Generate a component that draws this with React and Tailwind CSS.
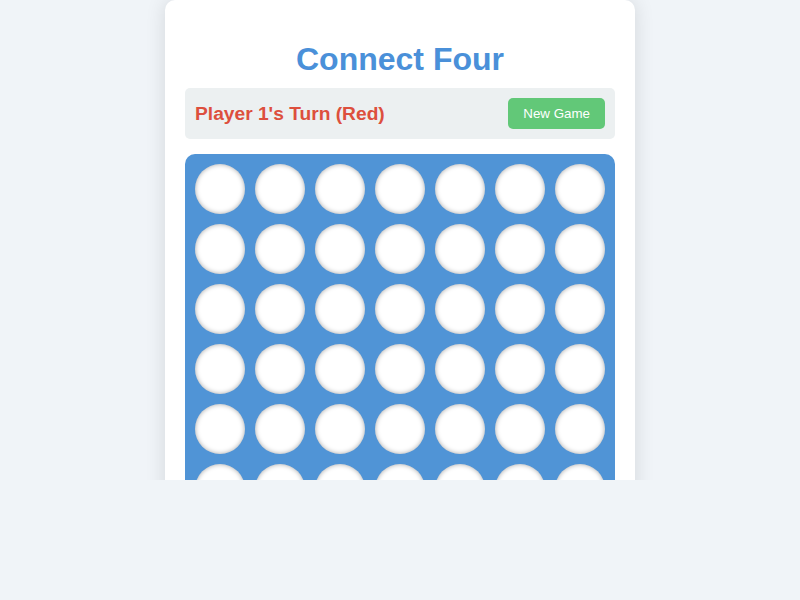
const ROWS = 6;
const COLS = 7;

const Cell = () => (
  <div className="h-[50px] w-[50px] rounded-full bg-white shadow-[inset_0_0_5px_rgba(0,0,0,0.35)]" />
);

const App = () => {
  const cells = Array.from({ length: ROWS * COLS });

  return (
    <div
      className="min-h-[600px] w-full bg-[#f0f4f8]"
      style={{ fontFamily: '"Liberation Sans", Arial, sans-serif' }}
    >
      <div className="h-[480px] overflow-hidden">
        <div className="mx-auto w-[470px] rounded-[10px] bg-white p-5 shadow-[0_0_20px_rgba(0,0,0,0.12)]">
          <h1 className="mt-[21px] mb-[10px] text-center text-[32px] font-bold leading-[37px] text-[#4a90d9]">
            Connect Four
          </h1>

          <div className="mb-[15px] flex items-center justify-between rounded-[5px] bg-[#ecf0f1] p-[10px]">
            <span className="text-[19.2px] font-bold leading-[22px] text-[#dd4f3d]">
              Player 1's Turn (Red)
            </span>
            <button className="rounded-[5px] bg-[#62c878] px-[15px] py-[8px] text-[13.33px] leading-[15px] text-white">
              New Game
            </button>
          </div>

          <div className="grid grid-cols-7 gap-[10px] rounded-[10px] bg-[#5094d6] p-[10px]">
            {cells.map((_, i) => (
              <Cell key={i} />
            ))}
          </div>
        </div>
      </div>
    </div>
  );
};

export default App;
